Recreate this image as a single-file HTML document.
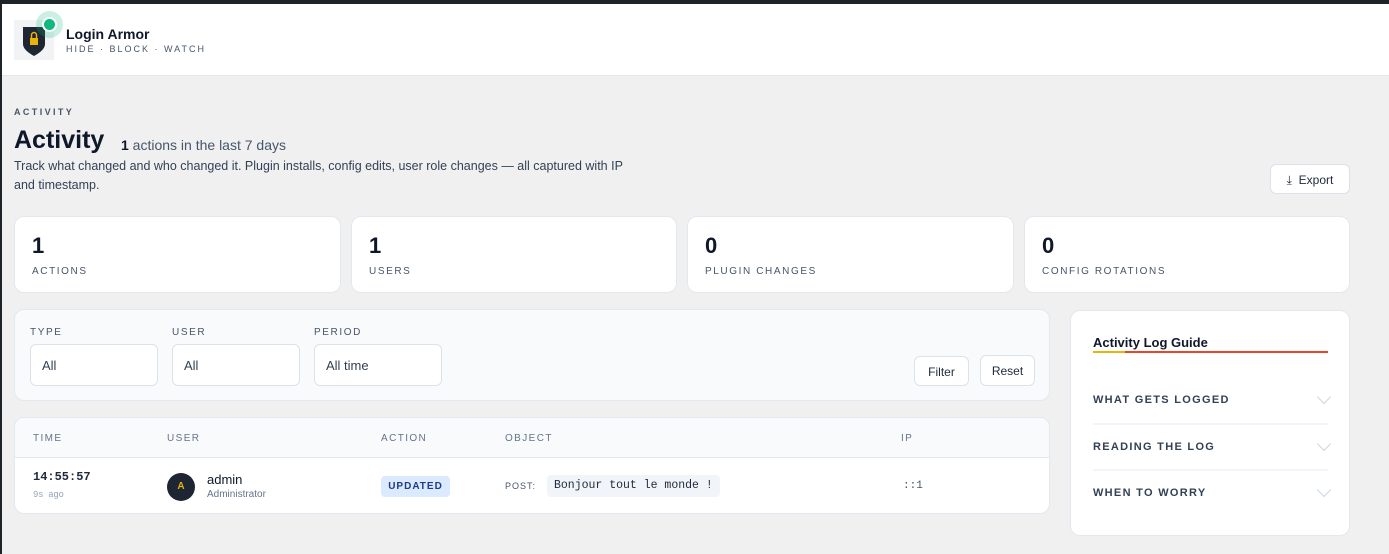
<!DOCTYPE html>
<html><head><meta charset="utf-8"><style>
*{box-sizing:border-box;margin:0;padding:0}
body{width:1389px;height:554px;overflow:hidden;background:#f0f0f1;font-family:"Liberation Sans",sans-serif;color:#0f172a;position:relative}
.a{position:absolute}
.top{left:0;top:0;width:1389px;height:4px;background:#1d2327}
.lb{left:0;top:0;width:2px;height:554px;background:#1d2327}
.hdr{left:2px;top:4px;width:1387px;height:72px;background:#fff;border-bottom:1px solid #e2e8f0}
.card{background:#fff;border:1px solid #e2e8f0;border-radius:10px}
.lab{font-size:10px;letter-spacing:1.6px;color:#475569;font-weight:bold}
.num{font-size:22px;font-weight:bold;color:#0f172a}
.inp{background:#fff;border:1px solid #dbe2ea;border-radius:6px;height:42px;font-size:13px;color:#334155;padding:13px 11px}
.btn{background:#fff;border:1px solid #dbe2ea;border-radius:6px;font-size:12px;color:#1e293b;text-align:center}
.th{font-size:10px;letter-spacing:1.4px;color:#64748b}
.gi{left:22px;width:234px;font-size:11px;font-weight:bold;letter-spacing:1.3px;color:#334155}
.chev{right:20px;width:10px;height:10px;border-right:1.5px solid #cbd5e1;border-bottom:1.5px solid #cbd5e1;transform:rotate(45deg)}
</style></head><body>
<div class="a top"></div><div class="a lb"></div>
<div class="a hdr">
 <div class="a" style="left:12px;top:16px;width:40px;height:40px;background:#f1f3f5"></div>
 <svg class="a" style="left:18px;top:20px" width="30" height="34" viewBox="0 0 30 34"><path d="M3 3 L25 3 L25 20 Q25 26 14 32 Q3 26 3 20Z" fill="#1e2533"/><rect x="10" y="14" width="8" height="7" fill="#eab308"/><path d="M11.5 14 v-3 a2.5 2.5 0 0 1 5 0 v3" stroke="#eab308" stroke-width="1.5" fill="none"/></svg>
 <div class="a" style="left:34px;top:7px;width:27px;height:27px;border-radius:50%;background:rgba(16,185,129,0.22)"></div>
 <div class="a" style="left:42px;top:15px;width:11px;height:11px;border-radius:50%;background:#10b981;box-shadow:0 0 0 2px #fff"></div>
 <div class="a" style="left:64px;top:22px;font-size:14px;font-weight:bold">Login Armor</div>
 <div class="a" style="left:64px;top:40px;font-size:9px;letter-spacing:2px;color:#475569">HIDE · BLOCK · WATCH</div>
</div>
<div class="a lab" style="left:14px;top:107px;font-size:9px;letter-spacing:2.4px">ACTIVITY</div>
<div class="a" style="left:14px;top:126px;font-size:25px;font-weight:bold">Activity</div>
<div class="a" style="left:121px;top:137px;font-size:14px;color:#475569"><b style="color:#0f172a">1</b> actions in the last 7 days</div>
<div class="a" style="left:14px;top:157px;width:626px;font-size:12.5px;line-height:19px;color:#334155">Track what changed and who changed it. Plugin installs, config edits, user role changes — all captured with IP and timestamp.</div>
<div class="a btn" style="left:1270px;top:164px;width:80px;height:30px;padding-top:8px">&#x2913;&nbsp; Export</div>

<div class="a card" style="left:14px;top:216px;width:327px;height:77px"><div class="a num" style="left:17px;top:16px">1</div><div class="a lab" style="left:17px;top:49px;font-weight:normal">ACTIONS</div></div>
<div class="a card" style="left:351px;top:216px;width:326px;height:77px"><div class="a num" style="left:17px;top:16px">1</div><div class="a lab" style="left:17px;top:49px;font-weight:normal">USERS</div></div>
<div class="a card" style="left:687px;top:216px;width:327px;height:77px"><div class="a num" style="left:17px;top:16px">0</div><div class="a lab" style="left:17px;top:49px;font-weight:normal">PLUGIN CHANGES</div></div>
<div class="a card" style="left:1024px;top:216px;width:326px;height:77px"><div class="a num" style="left:17px;top:16px">0</div><div class="a lab" style="left:17px;top:49px;font-weight:normal">CONFIG ROTATIONS</div></div>

<div class="a card" style="left:14px;top:309px;width:1036px;height:92px;background:#f8fafc">
 <div class="a lab" style="left:15px;top:17px;font-weight:normal">TYPE</div>
 <div class="a lab" style="left:157px;top:17px;font-weight:normal">USER</div>
 <div class="a lab" style="left:299px;top:17px;font-weight:normal">PERIOD</div>
 <div class="a inp" style="left:15px;top:34px;width:128px">All</div>
 <div class="a inp" style="left:157px;top:34px;width:128px">All</div>
 <div class="a inp" style="left:299px;top:34px;width:128px">All time</div>
 <div class="a btn" style="left:899px;top:46px;width:55px;height:30px;padding-top:8px">Filter</div>
 <div class="a btn" style="left:965px;top:45px;width:55px;height:31px;padding-top:8px">Reset</div>
</div>

<div class="a card" style="left:14px;top:417px;width:1036px;height:97px;overflow:hidden">
 <div class="a" style="left:0;top:0;width:1036px;height:40px;background:#f8fafc;border-bottom:1px solid #e2e8f0"></div>
 <div class="a th" style="left:18px;top:15px">TIME</div>
 <div class="a th" style="left:152px;top:15px">USER</div>
 <div class="a th" style="left:366px;top:15px">ACTION</div>
 <div class="a th" style="left:490px;top:15px">OBJECT</div>
 <div class="a th" style="left:886px;top:15px">IP</div>
 <div class="a" style="left:18px;top:52px;font-family:'Liberation Mono',monospace;font-size:12px;font-weight:bold;color:#1e293b">14:55:57</div>
 <div class="a" style="left:18px;top:72px;font-family:'Liberation Mono',monospace;font-size:9px;color:#94a3b8;letter-spacing:-0.3px">9s ago</div>
 <div class="a" style="left:152px;top:55px;width:28px;height:28px;border-radius:50%;background:#1e2533;color:#eab308;font-size:10px;font-weight:bold;text-align:center;line-height:28px">A</div>
 <div class="a" style="left:192px;top:54px;font-size:13px;color:#0f172a">admin</div>
 <div class="a" style="left:192px;top:71px;font-size:10px;color:#64748b">Administrator</div>
 <div class="a" style="left:366px;top:58px;width:69px;height:21px;border-radius:4px;background:#dbeafe;color:#1e3a8a;font-size:10px;font-weight:bold;letter-spacing:1px;text-align:center;line-height:21px">UPDATED</div>
 <div class="a" style="left:490px;top:63px;font-size:9px;letter-spacing:1px;color:#475569">POST:</div>
 <div class="a" style="left:532px;top:57px;height:22px;padding:0 7px;border-radius:4px;background:#f1f5f9;font-family:'Liberation Mono',monospace;font-size:11.5px;line-height:22px;color:#1e293b">Bonjour tout le monde !</div>
 <div class="a" style="left:888px;top:62px;font-family:'Liberation Mono',monospace;font-size:11px;color:#475569">::1</div>
</div>

<div class="a card" style="left:1070px;top:310px;width:280px;height:226px">
 <div class="a" style="left:22px;top:24px;font-size:13px;font-weight:bold">Activity Log Guide</div>
 <div class="a" style="left:22px;top:40px;width:235px;height:2px;background:#e6462b"></div>
 <div class="a" style="left:22px;top:40px;width:32px;height:2px;background:#eab308"></div>
 <div class="a gi" style="top:83px">WHAT GETS LOGGED</div><div class="a chev" style="top:81px"></div>
 <div class="a" style="left:22px;top:112px;width:235px;height:2px;background:#f1f5f9"></div>
 <div class="a gi" style="top:130px">READING THE LOG</div><div class="a chev" style="top:128px"></div>
 <div class="a" style="left:22px;top:158px;width:235px;height:2px;background:#f1f5f9"></div>
 <div class="a gi" style="top:176px">WHEN TO WORRY</div><div class="a chev" style="top:174px"></div>
</div>
</body></html>
